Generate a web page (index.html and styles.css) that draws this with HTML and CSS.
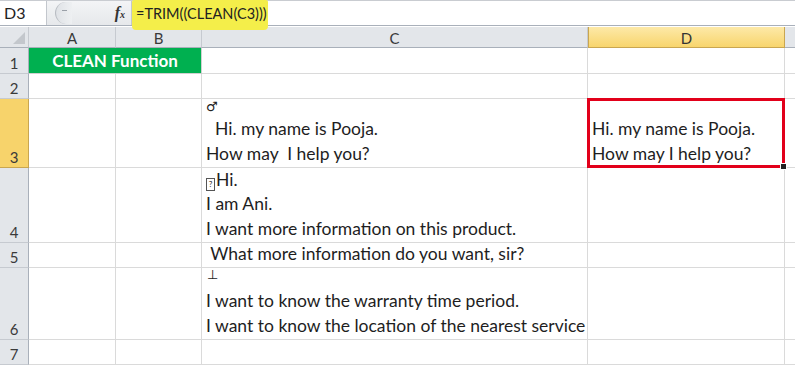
FILE: index.html
```html
<!DOCTYPE html>
<html lang="en">
<head>
    <meta charset="UTF-8">
    <title>CLEAN Function</title>
    <link rel="stylesheet" href="styles.css">
</head>
<body>

    <!-- formula bar -->
    <div class="formula-bar">
        <div class="name-box">D3</div>
        <div class="bar-gap">
            <span class="grip"></span>
            <span class="fx">f<span class="fx-x">x</span></span>
        </div>
        <div class="formula-input">
            <span class="formula">=TRIM((CLEAN(C3)))</span>
        </div>
    </div>

    <!-- sheet -->
    <div class="sheet">
        <div class="corner"><span class="corner-tri"></span></div>
        <div class="col-head">A</div>
        <div class="col-head">B</div>
        <div class="col-head">C</div>
        <div class="col-head active">D</div>
        <div class="col-head rest"></div>

        <div class="row-head">1</div>
        <div class="cell title">CLEAN Function</div>
        <div class="cell"></div>
        <div class="cell"></div>
        <div class="cell rest"></div>

        <div class="row-head">2</div>
        <div class="cell"></div>
        <div class="cell"></div>
        <div class="cell"></div>
        <div class="cell"></div>
        <div class="cell rest"></div>

        <div class="row-head active">3</div>
        <div class="cell"></div>
        <div class="cell"></div>
        <div class="cell text">
            <div class="line small"><span class="sym male">&#9794;</span></div>
            <div class="line">&nbsp;&nbsp;Hi. my name is Pooja.</div>
            <div class="line">How may&nbsp;&nbsp;I help you?</div>
        </div>
        <div class="cell text selected">
            <div class="line">Hi. my name is Pooja.</div>
            <div class="line">How may I help you?</div>
            <span class="fill-handle"></span>
        </div>
        <div class="cell rest"></div>

        <div class="row-head">4</div>
        <div class="cell"></div>
        <div class="cell"></div>
        <div class="cell text">
            <div class="line"><span class="missing">?</span>Hi.</div>
            <div class="line">I am Ani.</div>
            <div class="line">I want more information on this product.</div>
        </div>
        <div class="cell"></div>
        <div class="cell rest"></div>

        <div class="row-head">5</div>
        <div class="cell"></div>
        <div class="cell"></div>
        <div class="cell text">
            <div class="line">&nbsp;What more information do you want, sir?</div>
        </div>
        <div class="cell"></div>
        <div class="cell rest"></div>

        <div class="row-head">6</div>
        <div class="cell"></div>
        <div class="cell"></div>
        <div class="cell text">
            <div class="line gap"><span class="sym tack">&#8869;</span></div>
            <div class="line">I want to know the warranty time period.</div>
            <div class="line">I want to know the location of the nearest service</div>
        </div>
        <div class="cell"></div>
        <div class="cell rest"></div>

        <div class="row-head">7</div>
        <div class="cell"></div>
        <div class="cell"></div>
        <div class="cell"></div>
        <div class="cell"></div>
        <div class="cell rest"></div>
    </div>

</body>
</html>
```

FILE: styles.css
```css
/* page */
body {
    margin: 0;
    width: 795px;
    height: 365px;
    overflow: hidden;
    background: #ffffff;
    font-family: 'Lato', 'Liberation Sans', sans-serif;
    color: #222;
}

/* formula bar */
.formula-bar {
    display: flex;
    height: 26px;
    background: #eef0f3;
    border-top: 1px solid #c9ccd1;
    border-bottom: 1px solid #a9b0ba;
    box-sizing: border-box;
}

.name-box {
    width: 47px;
    background: #fff;
    border-right: 1px solid #c3c7cd;
    font-size: 16px;
    line-height: 24px;
    padding-left: 4px;
    box-sizing: border-box;
}

.bar-gap {
    width: 84px;
    display: flex;
    align-items: center;
    justify-content: space-between;
    padding: 0 6px 0 8px;
    background: linear-gradient(#f3f4f6, #e6e8eb);
    box-sizing: border-box;
}

.grip {
    width: 16px;
    height: 22px;
    border-radius: 11px 0 0 11px;
    border-left: 1px solid #b8bcc2;
    background: linear-gradient(90deg, #dfe2e6, #eef0f2);
    position: relative;
}

.grip::after {
    content: "";
    position: absolute;
    left: 6px;
    top: 8px;
    width: 5px;
    height: 1px;
    background: #9aa0a8;
}

.fx {
    font-family: 'Liberation Serif', serif;
    font-style: italic;
    font-weight: bold;
    font-size: 16px;
    color: #333;
}

.fx-x {
    font-size: 10px;
}

.formula-input {
    flex: 1;
    background: #fff;
    border-left: 1px solid #c3c7cd;
    position: relative;
}

.formula {
    position: absolute;
    left: 0;
    top: -1px;
    height: 30px;
    width: 136px;
    padding-left: 4px;
    box-sizing: border-box;
    background: #f4ee4a;
    border-radius: 2px 2px 4px 4px;
    font-size: 14.5px;
    line-height: 28px;
    color: #222;
    z-index: 2;
}

/* sheet grid */
.sheet {
    display: grid;
    grid-template-columns: 29px 87px 86px 386px 197px 1fr;
    grid-template-rows: 21px 26px 25px 69px 75px 25px 72px 25px;
    margin-top: 1px;
    background: #fff;
}

.corner,
.col-head,
.row-head {
    background: #e3e6ea;
    color: #3a3a3a;
    font-size: 15px;
    box-sizing: border-box;
    border-right: 1px solid #c6cad0;
    border-bottom: 1px solid #a9b0ba;
}

.corner {
    position: relative;
}

.corner-tri {
    position: absolute;
    right: 3px;
    bottom: 3px;
    width: 0;
    height: 0;
    border-left: 12px solid transparent;
    border-bottom: 12px solid #c3c7cc;
}

.col-head {
    display: flex;
    align-items: center;
    justify-content: center;
    padding-top: 1px;
}

.col-head.active {
    background: linear-gradient(#fde9a8, #f8d56d);
    border: 1px solid #c9a650;
    border-top: none;
    color: #333;
}

.row-head {
    display: flex;
    align-items: flex-end;
    justify-content: center;
    padding-bottom: 1px;
    border-bottom: 1px solid #c6cad0;
    border-right: 1px solid #a9b0ba;
}

.row-head.active {
    background: #f7d36b;
    border-right: 1px solid #c9a650;
    border-bottom: 1px solid #c9a650;
}

.cell {
    border-right: 1px solid #dadada;
    border-bottom: 1px solid #dadada;
    box-sizing: border-box;
    font-size: 17.5px;
    position: relative;
}

.cell.rest,
.col-head.rest {
    border-right: none;
}

.title {
    grid-column: span 2;
    background: #00b050;
    color: #fff;
    font-weight: bold;
    font-size: 17px;
    display: flex;
    align-items: center;
    justify-content: center;
    border-color: #d0d0d0;
}

/* multi-line cell text, bottom aligned */
.text {
    display: flex;
    flex-direction: column;
    justify-content: flex-end;
    padding: 0 0 1px 4px;
    white-space: nowrap;
    color: #1e1e1e;
}

.line {
    line-height: 24.5px;
    height: 24.5px;
    flex-shrink: 0;
}

.line.small {
    height: 19px;
    line-height: 14px;
}

.line.gap {
    height: 22px;
    line-height: 12px;
}

.sym {
    font-family: 'DejaVu Sans', sans-serif;
    color: #222;
}

.male {
    font-size: 13px;
}

.tack {
    font-size: 13px;
    padding-left: 1px;
}

.missing {
    display: inline-block;
    width: 9px;
    height: 13px;
    border: 1px solid #555;
    font-size: 8px;
    line-height: 11px;
    text-align: center;
    margin-right: 1px;
    box-sizing: border-box;
    vertical-align: -1px;
}

/* selected cell D3 */
.selected::after {
    content: "";
    position: absolute;
    left: -1px;
    top: -1px;
    right: -1px;
    bottom: -1px;
    border: 3px solid #e2001a;
    pointer-events: none;
}

.fill-handle {
    position: absolute;
    right: -3px;
    bottom: -3px;
    width: 5px;
    height: 5px;
    background: #222;
    border: 1px solid #fff;
    z-index: 3;
}
```
